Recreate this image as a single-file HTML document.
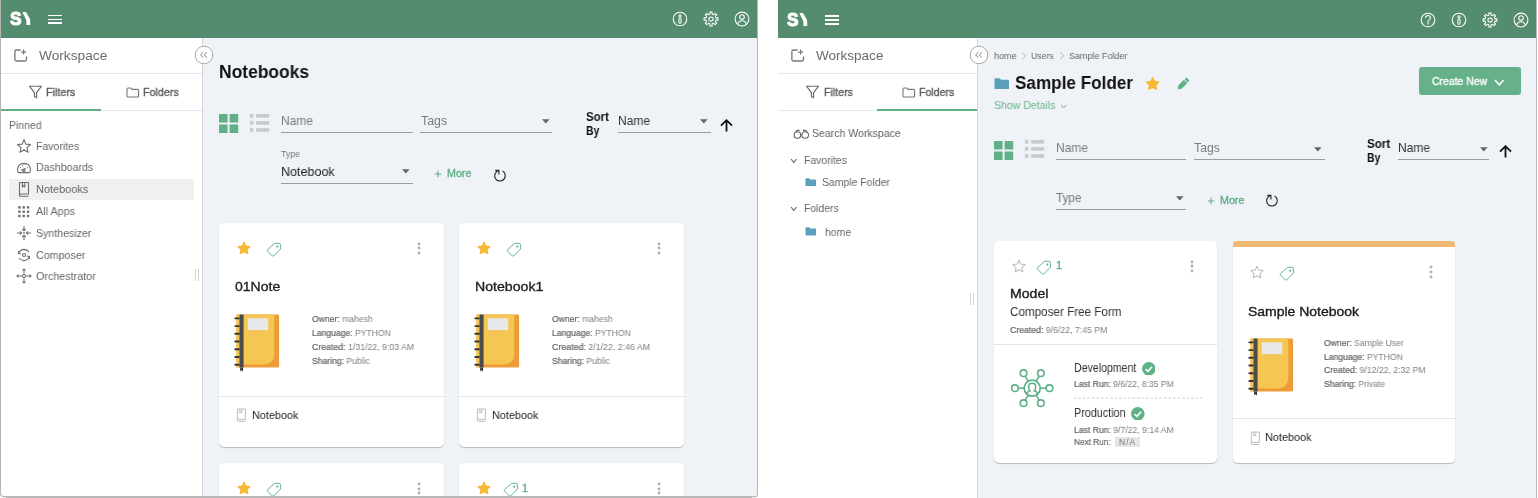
<!DOCTYPE html>
<html><head><meta charset="utf-8"><style>
html,body{margin:0;padding:0;}
body{width:1538px;height:498px;overflow:hidden;position:relative;background:#fff;font-family:"Liberation Sans",sans-serif;}
.t{position:absolute;white-space:nowrap;transform-origin:0 0;will-change:transform;}
.r{position:absolute;}
b{font-weight:bold;}
.lb{color:#666;-webkit-text-stroke:0.22px #666;}
</style></head><body>
<div class="r" style="left:0px;top:0px;width:758px;height:498px;background:#b4b4b4;border-bottom-left-radius:4px;border-bottom-right-radius:4px;"></div>
<div class="r" style="left:1px;top:0px;width:756px;height:496px;background:#ffffff;border-bottom-left-radius:3px;border-bottom-right-radius:3px;overflow:hidden;"></div>
<div class="r" style="left:1px;top:0px;width:756px;height:38px;background:#548c6f;"></div>
<div class="r" style="left:203px;top:38px;width:554px;height:458px;background:#eff3f7;border-bottom-right-radius:3px;"></div>
<div class="r" style="left:202px;top:38px;width:1px;height:458px;background:#d3d6da;"></div>
<div class="r" style="left:778px;top:0px;width:759px;height:498px;background:#b8b8b8;"></div>
<div class="r" style="left:778px;top:0px;width:758px;height:498px;background:#ffffff;"></div>
<div class="r" style="left:778px;top:0px;width:758px;height:38px;background:#548c6f;"></div>
<div class="r" style="left:978px;top:38px;width:558px;height:460px;background:#eff3f7;"></div>
<div class="r" style="left:977px;top:38px;width:1px;height:460px;background:#d3d6da;"></div>
<div class="t" style="left:10.3px;top:9.2px;font-size:19px;line-height:19px;color:#fff;font-weight:bold;transform:scaleX(0.9);-webkit-text-stroke:1.1px #fff;">S</div>
<svg class="r" style="left:20.3px;top:10px;" width="14" height="17" viewBox="0 0 14 17"><path d="M2.3 2.1 L6.0 2.1 L9.6 8.2 Q10.2 9.2 10.2 10.4 L10.2 15 L6.4 15 L6.4 11 Q6.4 10.2 6 9.5 Z" fill="#fff"/></svg>
<div class="r" style="left:48px;top:14.5px;width:14px;height:1.7px;background:#fff;"></div>
<div class="r" style="left:48px;top:18.5px;width:14px;height:1.7px;background:#fff;"></div>
<div class="r" style="left:48px;top:22.4px;width:14px;height:1.7px;background:#fff;"></div>
<svg class="r" style="left:670.5px;top:10.2px;" width="18" height="18" viewBox="0 0 18 18"><circle cx="9" cy="9" r="6.8" fill="none" stroke="#fff" stroke-width="1.05"/><circle cx="9" cy="5.9" r="1.1" fill="none" stroke="#fff" stroke-width="1.05"/><rect x="7.9" y="8.3" width="2.2" height="5" rx="1.1" fill="none" stroke="#fff" stroke-width="1.05"/></svg>
<svg class="r" style="left:701.6px;top:10.2px;" width="18" height="18" viewBox="0 0 18 18"><path d="M7.09 4.38 L7.88 4.13 L7.84 2.10 L10.16 2.10 L10.12 4.13 L10.91 4.38 L11.65 4.76 L13.06 3.30 L14.70 4.94 L13.24 6.35 L13.62 7.09 L13.87 7.88 L15.90 7.84 L15.90 10.16 L13.87 10.12 L13.62 10.91 L13.24 11.65 L14.70 13.06 L13.06 14.70 L11.65 13.24 L10.91 13.62 L10.12 13.87 L10.16 15.90 L7.84 15.90 L7.88 13.87 L7.09 13.62 L6.35 13.24 L4.94 14.70 L3.30 13.06 L4.76 11.65 L4.38 10.91 L4.13 10.12 L2.10 10.16 L2.10 7.84 L4.13 7.88 L4.38 7.09 L4.76 6.35 L3.30 4.94 L4.94 3.30 L6.35 4.76 Z" fill="none" stroke="#fff" stroke-width="1.05" stroke-linejoin="round"/><circle cx="9" cy="9" r="2.1" fill="none" stroke="#fff" stroke-width="1.05"/></svg>
<svg class="r" style="left:732.5px;top:10.2px;" width="18" height="18" viewBox="0 0 18 18"><circle cx="9" cy="9" r="6.9" fill="none" stroke="#fff" stroke-width="1.05"/><circle cx="9" cy="7" r="2.3" fill="none" stroke="#fff" stroke-width="1.05"/><path d="M4.6 14.3 Q5.6 10.8 9 10.8 Q12.4 10.8 13.4 14.3" fill="none" stroke="#fff" stroke-width="1.05"/></svg>
<div class="t" style="left:787.3px;top:9.899999999999999px;font-size:19px;line-height:19px;color:#fff;font-weight:bold;transform:scaleX(0.9);-webkit-text-stroke:1.1px #fff;">S</div>
<svg class="r" style="left:797.3px;top:10.7px;" width="14" height="17" viewBox="0 0 14 17"><path d="M2.3 2.1 L6.0 2.1 L9.6 8.2 Q10.2 9.2 10.2 10.4 L10.2 15 L6.4 15 L6.4 11 Q6.4 10.2 6 9.5 Z" fill="#fff"/></svg>
<div class="r" style="left:825px;top:15.2px;width:14px;height:1.7px;background:#fff;"></div>
<div class="r" style="left:825px;top:19.2px;width:14px;height:1.7px;background:#fff;"></div>
<div class="r" style="left:825px;top:23.099999999999998px;width:14px;height:1.7px;background:#fff;"></div>
<svg class="r" style="left:1419.3px;top:10.899999999999999px;" width="18" height="18" viewBox="0 0 18 18"><circle cx="9" cy="9" r="6.8" fill="none" stroke="#fff" stroke-width="1.05"/><path d="M6.6 7 Q6.6 4.4 9 4.4 Q11.4 4.4 11.4 6.8 Q11.4 8.3 9.6 9.4 Q9 9.8 9 11 L9 13.6" fill="none" stroke="#fff" stroke-width="1.05"/></svg>
<svg class="r" style="left:1450px;top:10.899999999999999px;" width="18" height="18" viewBox="0 0 18 18"><circle cx="9" cy="9" r="6.8" fill="none" stroke="#fff" stroke-width="1.05"/><circle cx="9" cy="5.9" r="1.1" fill="none" stroke="#fff" stroke-width="1.05"/><rect x="7.9" y="8.3" width="2.2" height="5" rx="1.1" fill="none" stroke="#fff" stroke-width="1.05"/></svg>
<svg class="r" style="left:1481px;top:10.899999999999999px;" width="18" height="18" viewBox="0 0 18 18"><path d="M7.09 4.38 L7.88 4.13 L7.84 2.10 L10.16 2.10 L10.12 4.13 L10.91 4.38 L11.65 4.76 L13.06 3.30 L14.70 4.94 L13.24 6.35 L13.62 7.09 L13.87 7.88 L15.90 7.84 L15.90 10.16 L13.87 10.12 L13.62 10.91 L13.24 11.65 L14.70 13.06 L13.06 14.70 L11.65 13.24 L10.91 13.62 L10.12 13.87 L10.16 15.90 L7.84 15.90 L7.88 13.87 L7.09 13.62 L6.35 13.24 L4.94 14.70 L3.30 13.06 L4.76 11.65 L4.38 10.91 L4.13 10.12 L2.10 10.16 L2.10 7.84 L4.13 7.88 L4.38 7.09 L4.76 6.35 L3.30 4.94 L4.94 3.30 L6.35 4.76 Z" fill="none" stroke="#fff" stroke-width="1.05" stroke-linejoin="round"/><circle cx="9" cy="9" r="2.1" fill="none" stroke="#fff" stroke-width="1.05"/></svg>
<svg class="r" style="left:1511.7px;top:10.899999999999999px;" width="18" height="18" viewBox="0 0 18 18"><circle cx="9" cy="9" r="6.9" fill="none" stroke="#fff" stroke-width="1.05"/><circle cx="9" cy="7" r="2.3" fill="none" stroke="#fff" stroke-width="1.05"/><path d="M4.6 14.3 Q5.6 10.8 9 10.8 Q12.4 10.8 13.4 14.3" fill="none" stroke="#fff" stroke-width="1.05"/></svg>
<svg class="r" style="left:12.6px;top:48.3px;" width="16" height="16" viewBox="0 0 16 16"><path d="M7.6 2 L3.3 2 Q1.9 2 1.9 3.4 L1.9 11.6 Q1.9 13 3.3 13 L12 13 Q13.5 13 13.5 11.6 L13.5 8.6" fill="none" stroke="#777" stroke-width="1.3"/><path d="M10.6 1.6 L10.6 6.6 M8.1 4.1 L13.1 4.1" fill="none" stroke="#777" stroke-width="1.2"/></svg>
<div class="r" style="left:1px;top:72.5px;width:201px;height:1px;background:#e3e6ea;"></div>
<svg class="r" style="left:27.5px;top:84.5px;" width="16" height="15" viewBox="0 0 16 15"><path d="M1.5 1.2 L13.5 1.2 L8.6 7.6 L8.6 12.8 L6.4 11.6 L6.4 7.6 Z" fill="none" stroke="#6a6a6a" stroke-width="1.15" stroke-linejoin="round"/></svg>
<svg class="r" style="left:126px;top:87px;" width="14" height="11" viewBox="0 0 14 11"><path d="M1 2 Q1 1 2 1 L4.8 1 L6.2 2.4 L11.6 2.4 Q12.6 2.4 12.6 3.4 L12.6 9 Q12.6 10 11.6 10 L2 10 Q1 10 1 9 Z" fill="none" stroke="#777" stroke-width="1.1" stroke-linejoin="round"/></svg>
<div class="r" style="left:1px;top:109.5px;width:201px;height:1px;background:#e6e9ec;"></div>
<div class="r" style="left:1px;top:108.8px;width:100px;height:2.2px;background:#5fae86;"></div>
<svg class="r" style="left:789.6px;top:48.3px;" width="16" height="16" viewBox="0 0 16 16"><path d="M7.6 2 L3.3 2 Q1.9 2 1.9 3.4 L1.9 11.6 Q1.9 13 3.3 13 L12 13 Q13.5 13 13.5 11.6 L13.5 8.6" fill="none" stroke="#777" stroke-width="1.3"/><path d="M10.6 1.6 L10.6 6.6 M8.1 4.1 L13.1 4.1" fill="none" stroke="#777" stroke-width="1.2"/></svg>
<div class="r" style="left:778px;top:72.5px;width:199px;height:1px;background:#e3e6ea;"></div>
<svg class="r" style="left:804.5px;top:84.5px;" width="16" height="15" viewBox="0 0 16 15"><path d="M1.5 1.2 L13.5 1.2 L8.6 7.6 L8.6 12.8 L6.4 11.6 L6.4 7.6 Z" fill="none" stroke="#6a6a6a" stroke-width="1.15" stroke-linejoin="round"/></svg>
<svg class="r" style="left:901.8px;top:87px;" width="14" height="11" viewBox="0 0 14 11"><path d="M1 2 Q1 1 2 1 L4.8 1 L6.2 2.4 L11.6 2.4 Q12.6 2.4 12.6 3.4 L12.6 9 Q12.6 10 11.6 10 L2 10 Q1 10 1 9 Z" fill="none" stroke="#777" stroke-width="1.1" stroke-linejoin="round"/></svg>
<div class="r" style="left:778px;top:109.5px;width:199px;height:1px;background:#e6e9ec;"></div>
<div class="r" style="left:877.3px;top:108.8px;width:99.7px;height:2.2px;background:#5fae86;"></div>
<svg class="r" style="left:193.9px;top:44.6px;" width="20" height="20" viewBox="0 0 20 20"><circle cx="10" cy="10" r="8.8" fill="#fff" stroke="#a8a8a8" stroke-width="1"/><path d="M9.4 7.2 L6.6 9.9 L9.4 12.6 M13 7.2 L10.2 9.9 L13 12.6" fill="none" stroke="#7a7a7a" stroke-width="0.95"/></svg>
<svg class="r" style="left:969px;top:44.8px;" width="20" height="20" viewBox="0 0 20 20"><circle cx="10" cy="10" r="8.8" fill="#fff" stroke="#a8a8a8" stroke-width="1"/><path d="M9.4 7.2 L6.6 9.9 L9.4 12.6 M13 7.2 L10.2 9.9 L13 12.6" fill="none" stroke="#7a7a7a" stroke-width="0.95"/></svg>
<div id="ws_l" class="t" style="left:39.40px;top:49.00px;font-size:13.5px;line-height:13.5px;color:#6b6b6b;font-weight:normal;transform:scaleX(1.0151);">Workspace</div>
<div id="fil_l" class="t" style="left:46.30px;top:87.00px;font-size:11.2px;line-height:11.2px;color:#5a5a5a;font-weight:normal;transform:scaleX(0.9649);-webkit-text-stroke:0.35px #5a5a5a;">Filters</div>
<div id="fol_l" class="t" style="left:143.30px;top:87.00px;font-size:11.2px;line-height:11.2px;color:#5a5a5a;font-weight:normal;transform:scaleX(0.9595);-webkit-text-stroke:0.35px #5a5a5a;">Folders</div>
<div id="pinned" class="t" style="left:8.70px;top:120.00px;font-size:11px;line-height:11px;color:#6b6b6b;font-weight:normal;transform:scaleX(0.9514);">Pinned</div>
<div class="r" style="left:9px;top:179px;width:185px;height:21px;background:#f0f0f0;"></div>
<div id="pin0" class="t" style="left:35.70px;top:141.00px;font-size:11px;line-height:11px;color:#666;font-weight:normal;transform:scaleX(0.9569);">Favorites</div>
<div id="pin1" class="t" style="left:35.70px;top:162.00px;font-size:11px;line-height:11px;color:#666;font-weight:normal;transform:scaleX(0.9641);">Dashboards</div>
<div id="pin2" class="t" style="left:35.70px;top:184.00px;font-size:11px;line-height:11px;color:#666;font-weight:normal;transform:scaleX(0.9944);">Notebooks</div>
<div id="pin3" class="t" style="left:35.70px;top:206.00px;font-size:11px;line-height:11px;color:#666;font-weight:normal;transform:scaleX(0.9811);">All Apps</div>
<div id="pin4" class="t" style="left:35.70px;top:228.00px;font-size:11px;line-height:11px;color:#666;font-weight:normal;transform:scaleX(0.9637);">Synthesizer</div>
<div id="pin5" class="t" style="left:35.70px;top:250.00px;font-size:11px;line-height:11px;color:#666;font-weight:normal;transform:scaleX(0.9734);">Composer</div>
<div id="pin6" class="t" style="left:35.70px;top:271.00px;font-size:11px;line-height:11px;color:#666;font-weight:normal;transform:scaleX(0.9764);">Orchestrator</div>
<svg class="r" style="left:16px;top:138px;" width="16" height="16" viewBox="0 0 16 16"><path d="M8.00 1.70 L9.82 6.09 L14.56 6.47 L10.95 9.56 L12.06 14.18 L8.00 11.70 L3.94 14.18 L5.05 9.56 L1.44 6.47 L6.18 6.09 Z" fill="none" stroke="#6e6e6e" stroke-width="1.1" stroke-linejoin="round"/></svg>
<svg class="r" style="left:16px;top:160px;" width="16" height="16" viewBox="0 0 16 16"><path d="M2.3 12.6 Q1.4 11 1.6 9 Q2.2 3.6 8 3.4 Q13.8 3.6 14.4 9 Q14.6 11 13.7 12.6 Z" fill="none" stroke="#6e6e6e" stroke-width="1.1" stroke-linejoin="round"/><path d="M5 10.5 L9.6 8.3" fill="none" stroke="#6e6e6e" stroke-width="1.1"/><circle cx="8" cy="10.4" r="1" fill="none" stroke="#6e6e6e" stroke-width="1.1"/><path d="M4 7.5 L4.8 8 M6.3 5.6 L6.7 6.3 M11.9 7.5 L11.2 8" fill="none" stroke="#6e6e6e" stroke-width="1.1"/></svg>
<svg class="r" style="left:16px;top:181px;" width="16" height="18" viewBox="0 0 16 18"><path d="M3.5 1.5 L12.5 1.5 L12.5 13 L4.6 13 Q3.5 13 3.5 14.2 Q3.5 15.3 4.6 15.3 L12.5 15.3 M3.5 1.5 L3.5 14.2 M6.4 1.5 L6.4 5.8 L7.6 4.8 L8.8 5.8 L8.8 1.5" fill="none" stroke="#6e6e6e" stroke-width="1.1"/></svg>
<svg class="r" style="left:16px;top:204px;" width="16" height="16" viewBox="0 0 16 16"><rect x="2.2" y="2.2" width="2.4" height="2.4" fill="#6e6e6e"/><rect x="6.5" y="2.2" width="2.4" height="2.4" fill="#6e6e6e"/><rect x="10.8" y="2.2" width="2.4" height="2.4" fill="#6e6e6e"/><rect x="2.2" y="6.5" width="2.4" height="2.4" fill="#6e6e6e"/><rect x="6.5" y="6.5" width="2.4" height="2.4" fill="#6e6e6e"/><rect x="10.8" y="6.5" width="2.4" height="2.4" fill="#6e6e6e"/><rect x="2.2" y="10.8" width="2.4" height="2.4" fill="#6e6e6e"/><rect x="6.5" y="10.8" width="2.4" height="2.4" fill="#6e6e6e"/><rect x="10.8" y="10.8" width="2.4" height="2.4" fill="#6e6e6e"/></svg>
<svg class="r" style="left:16px;top:225px;" width="16" height="16" viewBox="0 0 16 16"><path d="M8 1 L8 5.6 M8 10.4 L8 15 M1 8 L5.6 8 M10.4 8 L15 8" fill="none" stroke="#6e6e6e" stroke-width="1.1"/><path d="M6.4 4 L8 5.6 L9.6 4 M6.4 12 L8 10.4 L9.6 12 M4 6.4 L5.6 8 L4 9.6 M12 6.4 L10.4 8 L12 9.6" fill="none" stroke="#6e6e6e" stroke-width="1.1"/><circle cx="8" cy="8" r="0.9" fill="#6e6e6e"/></svg>
<svg class="r" style="left:16px;top:247px;" width="16" height="16" viewBox="0 0 16 16"><path d="M2.6 6.6 Q3.8 2.6 8.2 2.4 Q11.4 2.6 12.8 5" fill="none" stroke="#6e6e6e" stroke-width="1.1"/><path d="M13.4 9.4 Q12.2 13.4 7.8 13.6 Q4.6 13.4 3.2 11" fill="none" stroke="#6e6e6e" stroke-width="1.1"/><path d="M2.6 4 L2.6 6.8 L5.2 6.8 M13.4 12 L13.4 9.2 L10.8 9.2" fill="none" stroke="#6e6e6e" stroke-width="1.1"/><circle cx="8" cy="8" r="1.5" fill="none" stroke="#6e6e6e" stroke-width="1.1"/></svg>
<svg class="r" style="left:16px;top:268px;" width="16" height="16" viewBox="0 0 16 16"><path d="M8 1 L8 5.8 M8 10.2 L8 15 M1 8 L5.8 8 M10.2 8 L15 8" fill="none" stroke="#6e6e6e" stroke-width="1.1"/><path d="M6.6 2.6 L8 1 L9.4 2.6 M6.6 13.4 L8 15 L9.4 13.4 M2.6 6.6 L1 8 L2.6 9.4 M13.4 6.6 L15 8 L13.4 9.4" fill="none" stroke="#6e6e6e" stroke-width="1.1"/><circle cx="8" cy="8" r="1.5" fill="none" stroke="#6e6e6e" stroke-width="1.1"/></svg>
<div class="r" style="left:195.3px;top:269px;width:1px;height:11.8px;background:#d2d2d2;"></div>
<div class="r" style="left:198.2px;top:269px;width:1px;height:11.8px;background:#d2d2d2;"></div>
<div id="ws_r" class="t" style="left:816.30px;top:49.00px;font-size:13.5px;line-height:13.5px;color:#6b6b6b;font-weight:normal;transform:scaleX(1.0018);">Workspace</div>
<div id="fil_r" class="t" style="left:823.50px;top:87.00px;font-size:11.2px;line-height:11.2px;color:#5a5a5a;font-weight:normal;transform:scaleX(0.9485);-webkit-text-stroke:0.35px #5a5a5a;">Filters</div>
<div id="fol_r" class="t" style="left:919.20px;top:87.00px;font-size:11.2px;line-height:11.2px;color:#5a5a5a;font-weight:normal;transform:scaleX(0.9461);-webkit-text-stroke:0.35px #5a5a5a;">Folders</div>
<svg class="r" style="left:792.5px;top:128.5px;" width="17" height="11" viewBox="0 0 17 11"><circle cx="4.4" cy="6" r="3.3" fill="none" stroke="#666" stroke-width="1.1"/><circle cx="12.2" cy="6" r="3.3" fill="none" stroke="#666" stroke-width="1.1"/><path d="M2.2 3.5 L4 1.4 L6.6 1.4 M14.4 3.5 L12.6 1.4 L10 1.4 M7.7 5.5 L8.9 5.5" fill="none" stroke="#666" stroke-width="1.1"/></svg>
<div id="search" class="t" style="left:812.30px;top:128.00px;font-size:11px;line-height:11px;color:#5f5f5f;font-weight:normal;transform:scaleX(0.9576);">Search Workspace</div>
<svg class="r" style="left:789.6px;top:158.2px;" width="7.6" height="5.4" viewBox="0 0 7.6 5.4"><path d="M1 1 L3.8 4.4 L6.6 1" fill="none" stroke="#666" stroke-width="1.1"/></svg>
<div id="favs_r" class="t" style="left:803.70px;top:155.00px;font-size:11px;line-height:11px;color:#666;font-weight:normal;transform:scaleX(0.9503);">Favorites</div>
<svg class="r" style="left:804.8px;top:177.5px;" width="11.5" height="8.8" viewBox="0 0 11.5 8.8"><path d="M0.5 1.2 Q0.5 0.3 1.4 0.3 L4.14 0.3 L5.29 1.41 L10.30 1.41 Q11.20 1.41 11.20 2.79 L11.20 7.70 Q11.20 8.60 10.30 8.60 L1.4 8.60 Q0.5 8.60 0.5 7.70 Z" fill="#5b9fbd"/></svg>
<div id="sf_r" class="t" style="left:822.00px;top:177.00px;font-size:11px;line-height:11px;color:#666;font-weight:normal;transform:scaleX(0.9490);">Sample Folder</div>
<svg class="r" style="left:789.6px;top:206.0px;" width="7.6" height="5.4" viewBox="0 0 7.6 5.4"><path d="M1 1 L3.8 4.4 L6.6 1" fill="none" stroke="#666" stroke-width="1.1"/></svg>
<div id="fold_tree" class="t" style="left:803.70px;top:203.00px;font-size:11px;line-height:11px;color:#666;font-weight:normal;transform:scaleX(0.9458);">Folders</div>
<svg class="r" style="left:804.8px;top:227.2px;" width="11.5" height="8.8" viewBox="0 0 11.5 8.8"><path d="M0.5 1.2 Q0.5 0.3 1.4 0.3 L4.14 0.3 L5.29 1.41 L10.30 1.41 Q11.20 1.41 11.20 2.79 L11.20 7.70 Q11.20 8.60 10.30 8.60 L1.4 8.60 Q0.5 8.60 0.5 7.70 Z" fill="#5b9fbd"/></svg>
<div id="home_r" class="t" style="left:824.60px;top:227.00px;font-size:11px;line-height:11px;color:#666;font-weight:normal;transform:scaleX(0.9480);">home</div>
<div class="r" style="left:969.9px;top:293px;width:1px;height:12px;background:#d2d2d2;"></div>
<div class="r" style="left:973px;top:293px;width:1px;height:12px;background:#d2d2d2;"></div>
<div id="title_l" class="t" style="left:219.10px;top:64.00px;font-size:17.5px;line-height:17.5px;color:#111;font-weight:bold;transform:scaleX(0.9952);">Notebooks</div>
<svg class="r" style="left:219px;top:113.8px;" width="19.5" height="19.5" viewBox="0 0 19.5 19.5"><rect x="0.0" y="0.0" width="8.6" height="8.6" rx="0.6" fill="#60b088"/><rect x="10.6" y="0.0" width="8.6" height="8.6" rx="0.6" fill="#60b088"/><rect x="0.0" y="10.6" width="8.6" height="8.6" rx="0.6" fill="#60b088"/><rect x="10.6" y="10.6" width="8.6" height="8.6" rx="0.6" fill="#60b088"/></svg>
<svg class="r" style="left:250px;top:113.8px;" width="19.5" height="19" viewBox="0 0 19.5 19"><rect x="0" y="0.0" width="3.4" height="3.6" fill="#c5cacf"/><rect x="6.2" y="0.0" width="13" height="3.6" fill="#c5cacf"/><rect x="0" y="7.1" width="3.4" height="3.6" fill="#c5cacf"/><rect x="6.2" y="7.1" width="13" height="3.6" fill="#c5cacf"/><rect x="0" y="14.2" width="3.4" height="3.6" fill="#c5cacf"/><rect x="6.2" y="14.2" width="13" height="3.6" fill="#c5cacf"/></svg>
<div id="nm_l" class="t" style="left:281.10px;top:115.00px;font-size:12.2px;line-height:12.2px;color:#7b7b7b;font-weight:normal;transform:scaleX(0.9811);">Name</div>
<div class="r" style="left:281px;top:132px;width:131.7px;height:1px;background:#9a9a9a;"></div>
<div id="tg_l" class="t" style="left:420.50px;top:115.00px;font-size:12.2px;line-height:12.2px;color:#7b7b7b;font-weight:normal;transform:scaleX(1.0175);">Tags</div>
<svg class="r" style="left:541.5px;top:118.7px;" width="8" height="5" viewBox="0 0 8 5"><path d="M0 0.2 L7.6 0.2 L3.8 4.6 Z" fill="#666"/></svg>
<div class="r" style="left:420.3px;top:132px;width:131.7px;height:1px;background:#9a9a9a;"></div>
<div id="sort_l" class="t" style="left:586.30px;top:111.00px;font-size:12px;line-height:12px;color:#111;font-weight:bold;transform:scaleX(0.9542);">Sort</div>
<div id="by_l" class="t" style="left:586.30px;top:125.00px;font-size:12px;line-height:12px;color:#111;font-weight:bold;transform:scaleX(0.8668);">By</div>
<div id="sn_l" class="t" style="left:617.60px;top:115.00px;font-size:12.2px;line-height:12.2px;color:#333;font-weight:normal;transform:scaleX(0.9872);">Name</div>
<svg class="r" style="left:699.9px;top:119px;" width="8" height="5" viewBox="0 0 8 5"><path d="M0 0.2 L7.6 0.2 L3.8 4.6 Z" fill="#666"/></svg>
<div class="r" style="left:617.9px;top:132px;width:92.8px;height:1px;background:#9a9a9a;"></div>
<svg class="r" style="left:719.5px;top:118.5px;" width="13" height="13" viewBox="0 0 13 13"><path d="M6.5 12.5 L6.5 1.2 M1 6.6 L6.5 1.2 L12 6.6" fill="none" stroke="#111" stroke-width="1.8"/></svg>
<div id="type_l" class="t" style="left:280.70px;top:150.00px;font-size:9px;line-height:9px;color:#777;font-weight:normal;transform:scaleX(0.9736);">Type</div>
<div id="nbsel_l" class="t" style="left:280.70px;top:165.00px;font-size:13.2px;line-height:13.2px;color:#222;font-weight:normal;transform:scaleX(0.9512);">Notebook</div>
<svg class="r" style="left:402.3px;top:169px;" width="8" height="5" viewBox="0 0 8 5"><path d="M0 0.2 L7.6 0.2 L3.8 4.6 Z" fill="#666"/></svg>
<div class="r" style="left:281px;top:183px;width:131.7px;height:1px;background:#9a9a9a;"></div>
<svg class="r" style="left:434.3px;top:170.3px;" width="8" height="8" viewBox="0 0 8 8"><path d="M4 0.8 L4 7.2 M0.8 4 L7.2 4" fill="none" stroke="#5fae86" stroke-width="1.1"/></svg>
<div id="more_l" class="t" style="left:446.50px;top:168.00px;font-size:10.5px;line-height:10.5px;color:#5fae86;font-weight:normal;transform:scaleX(1.0193);-webkit-text-stroke:0.35px #5fae86;">More</div>
<svg class="r" style="left:492.5px;top:168.5px;" width="14" height="14" viewBox="0 0 14 14"><path d="M9.6 2.1 A5.3 5.3 0 1 1 5.9 1.5" fill="none" stroke="#2a2a2a" stroke-width="1.15"/><path d="M2.2 1.4 L5.9 1.4 L5.9 5.5" fill="none" stroke="#2a2a2a" stroke-width="1.15"/></svg>
<div id="bc1" class="t" style="left:994.20px;top:51.00px;font-size:9.5px;line-height:9.5px;color:#666;font-weight:normal;transform:scaleX(0.9467);">home</div>
<div id="bc2" class="t" style="left:1031.30px;top:51.00px;font-size:9.5px;line-height:9.5px;color:#666;font-weight:normal;transform:scaleX(0.9108);">Users</div>
<div id="bc3" class="t" style="left:1068.50px;top:51.00px;font-size:9.5px;line-height:9.5px;color:#666;font-weight:normal;transform:scaleX(0.9453);">Sample Folder</div>
<svg class="r" style="left:1021.3px;top:51px;" width="6" height="10" viewBox="0 0 6 10"><path d="M1.5 1.5 L4.5 4.8 L1.5 8.1" fill="none" stroke="#aaa" stroke-width="0.9"/></svg>
<svg class="r" style="left:1058.8px;top:51px;" width="6" height="10" viewBox="0 0 6 10"><path d="M1.5 1.5 L4.5 4.8 L1.5 8.1" fill="none" stroke="#aaa" stroke-width="0.9"/></svg>
<svg class="r" style="left:994px;top:77.6px;" width="15.4" height="11.6" viewBox="0 0 15.4 11.6"><path d="M0.5 1.2 Q0.5 0.3 1.4 0.3 L5.54 0.3 L7.08 1.86 L14.20 1.86 Q15.10 1.86 15.10 3.52 L15.10 10.50 Q15.10 11.40 14.20 11.40 L1.4 11.40 Q0.5 11.40 0.5 10.50 Z" fill="#5b9fbd"/></svg>
<div id="title_r" class="t" style="left:1014.70px;top:74.00px;font-size:18.5px;line-height:18.5px;color:#111;font-weight:bold;transform:scaleX(0.9256);">Sample Folder</div>
<svg class="r" style="left:1145px;top:76px;" width="16" height="15" viewBox="0 0 16 15"><path d="M7.60 1.70 L9.54 5.43 L13.69 6.12 L10.74 9.12 L11.36 13.28 L7.60 11.40 L3.84 13.28 L4.46 9.12 L1.51 6.12 L5.66 5.43 Z" fill="#f6b830" stroke="#f6b830" stroke-width="1.3" stroke-linejoin="round"/></svg>
<svg class="r" style="left:1175.8px;top:77px;" width="14" height="14" viewBox="0 0 14 14"><g transform="rotate(-45 7 7)"><path d="M0 7 L3 4.8 L10.5 4.8 L10.5 9.2 L3 9.2 Z" fill="#5db185" stroke="#5db185" stroke-width="0.5" stroke-linejoin="round"/><path d="M11.5 4.8 L13.2 4.8 Q14.1 4.8 14.1 5.7 L14.1 8.3 Q14.1 9.2 13.2 9.2 L11.5 9.2 Z" fill="#5db185"/></g></svg>
<div id="showdet" class="t" style="left:994.20px;top:100.00px;font-size:11.3px;line-height:11.3px;color:#6ab48c;font-weight:normal;transform:scaleX(0.9327);">Show Details</div>
<svg class="r" style="left:1060.4px;top:104px;" width="7.2" height="5" viewBox="0 0 7.2 5"><path d="M1 1 L3.6 4 L6.2 1" fill="none" stroke="#6ab48c" stroke-width="1.0"/></svg>
<div class="r" style="left:1419px;top:67.2px;width:102px;height:28px;background:#66b08a;border-radius:3px;"></div>
<div id="create" class="t" style="left:1431.50px;top:76.00px;font-size:11.2px;line-height:11.2px;color:#fff;font-weight:normal;transform:scaleX(0.9344);-webkit-text-stroke:0.35px #fff;">Create New</div>
<svg class="r" style="left:1494px;top:79px;" width="10.6" height="6.8" viewBox="0 0 10.6 6.8"><path d="M1 1 L5.3 5.8 L9.6 1" fill="none" stroke="#fff" stroke-width="1.5"/></svg>
<svg class="r" style="left:994px;top:140.5px;" width="19.5" height="19.5" viewBox="0 0 19.5 19.5"><rect x="0.0" y="0.0" width="8.6" height="8.6" rx="0.6" fill="#60b088"/><rect x="10.6" y="0.0" width="8.6" height="8.6" rx="0.6" fill="#60b088"/><rect x="0.0" y="10.6" width="8.6" height="8.6" rx="0.6" fill="#60b088"/><rect x="10.6" y="10.6" width="8.6" height="8.6" rx="0.6" fill="#60b088"/></svg>
<svg class="r" style="left:1025px;top:140.3px;" width="19.5" height="19" viewBox="0 0 19.5 19"><rect x="0" y="0.0" width="3.4" height="3.6" fill="#c5cacf"/><rect x="6.2" y="0.0" width="13" height="3.6" fill="#c5cacf"/><rect x="0" y="7.1" width="3.4" height="3.6" fill="#c5cacf"/><rect x="6.2" y="7.1" width="13" height="3.6" fill="#c5cacf"/><rect x="0" y="14.2" width="3.4" height="3.6" fill="#c5cacf"/><rect x="6.2" y="14.2" width="13" height="3.6" fill="#c5cacf"/></svg>
<div id="nm_r" class="t" style="left:1055.70px;top:142.00px;font-size:12.2px;line-height:12.2px;color:#7b7b7b;font-weight:normal;transform:scaleX(0.9841);">Name</div>
<div class="r" style="left:1056px;top:159px;width:130.3px;height:1px;background:#9a9a9a;"></div>
<div id="tg_r" class="t" style="left:1193.70px;top:142.00px;font-size:12.2px;line-height:12.2px;color:#7b7b7b;font-weight:normal;transform:scaleX(1.0058);">Tags</div>
<svg class="r" style="left:1314px;top:146.5px;" width="8" height="5" viewBox="0 0 8 5"><path d="M0 0.2 L7.6 0.2 L3.8 4.6 Z" fill="#666"/></svg>
<div class="r" style="left:1194px;top:159px;width:130.8px;height:1px;background:#9a9a9a;"></div>
<div id="sort_r" class="t" style="left:1366.50px;top:138.00px;font-size:12px;line-height:12px;color:#111;font-weight:bold;transform:scaleX(0.9667);">Sort</div>
<div id="by_r" class="t" style="left:1366.50px;top:152.00px;font-size:12px;line-height:12px;color:#111;font-weight:bold;transform:scaleX(0.8668);">By</div>
<div id="sn_r" class="t" style="left:1397.50px;top:142.00px;font-size:12.2px;line-height:12.2px;color:#333;font-weight:normal;transform:scaleX(0.9841);">Name</div>
<svg class="r" style="left:1479.6px;top:146.5px;" width="8" height="5" viewBox="0 0 8 5"><path d="M0 0.2 L7.6 0.2 L3.8 4.6 Z" fill="#666"/></svg>
<div class="r" style="left:1397.8px;top:159px;width:91.7px;height:1px;background:#9a9a9a;"></div>
<svg class="r" style="left:1498.8px;top:145px;" width="13" height="13" viewBox="0 0 13 13"><path d="M6.5 12.5 L6.5 1.2 M1 6.6 L6.5 1.2 L12 6.6" fill="none" stroke="#111" stroke-width="1.8"/></svg>
<div id="type_r" class="t" style="left:1055.70px;top:192.00px;font-size:12.2px;line-height:12.2px;color:#777;font-weight:normal;transform:scaleX(0.9613);">Type</div>
<svg class="r" style="left:1175.6px;top:196.3px;" width="8" height="5" viewBox="0 0 8 5"><path d="M0 0.2 L7.6 0.2 L3.8 4.6 Z" fill="#666"/></svg>
<div class="r" style="left:1056px;top:209px;width:130.3px;height:1px;background:#9a9a9a;"></div>
<svg class="r" style="left:1207.3px;top:197px;" width="8" height="8" viewBox="0 0 8 8"><path d="M4 0.8 L4 7.2 M0.8 4 L7.2 4" fill="none" stroke="#5fae86" stroke-width="1.1"/></svg>
<div id="more_r" class="t" style="left:1219.50px;top:195.00px;font-size:10.5px;line-height:10.5px;color:#5fae86;font-weight:normal;transform:scaleX(1.0193);-webkit-text-stroke:0.35px #5fae86;">More</div>
<svg class="r" style="left:1265px;top:194.3px;" width="14" height="14" viewBox="0 0 14 14"><path d="M9.6 2.1 A5.3 5.3 0 1 1 5.9 1.5" fill="none" stroke="#2a2a2a" stroke-width="1.15"/><path d="M2.2 1.4 L5.9 1.4 L5.9 5.5" fill="none" stroke="#2a2a2a" stroke-width="1.15"/></svg>
<div class="r" style="left:219.3px;top:222.7px;width:224.7px;height:224.3px;background:#fff;border-radius:5px;box-shadow:0 1px 1px rgba(0,0,0,0.24);"></div>
<svg class="r" style="left:236.60000000000002px;top:240.89999999999998px;" width="14" height="14" viewBox="0 0 14 14"><path d="M7.00 1.00 L8.88 5.01 L13.28 5.56 L10.04 8.59 L10.88 12.94 L7.00 10.80 L3.12 12.94 L3.96 8.59 L0.72 5.56 L5.12 5.01 Z" fill="#f6b830" stroke="#f6b830" stroke-width="1" stroke-linejoin="round"/></svg>
<svg class="r" style="left:266.0px;top:241.6px;" width="16" height="15" viewBox="0 0 16 15"><path d="M8.6 1.3 L13.4 1.3 Q14.4 1.3 14.4 2.3 L14.4 7.2 L7.6 14 Q7 14.6 6.4 14 L1.4 9 Q0.8 8.4 1.4 7.8 Z" fill="none" stroke="#62b38a" stroke-width="1.0" stroke-linejoin="round"/><circle cx="11.3" cy="4.6" r="1.05" fill="#62b38a"/></svg>
<svg class="r" style="left:416.80px;top:241.70px" width="4" height="4"><circle cx="2" cy="2" r="1.45" fill="#b0b0b0"/></svg>
<svg class="r" style="left:416.80px;top:246.40px" width="4" height="4"><circle cx="2" cy="2" r="1.45" fill="#b0b0b0"/></svg>
<svg class="r" style="left:416.80px;top:251.10px" width="4" height="4"><circle cx="2" cy="2" r="1.45" fill="#b0b0b0"/></svg>
<div id="c1t" class="t" style="left:234.60px;top:280.00px;font-size:13.2px;line-height:13.2px;color:#1e1e1e;font-weight:normal;transform:scaleX(1.0627);-webkit-text-stroke:0.35px #1e1e1e;">01Note</div>
<svg class="r" style="left:234.0px;top:313.5px;" width="46" height="58" viewBox="0 0 46 58"><path d="M2.5 0.6 L43.6 0.6 Q45.1 0.6 45.1 2 L45.1 52 Q45.1 53.4 43.6 53.4 L2.5 53.4 Z" fill="#ee9c3a"/><path d="M2.5 0.6 L40.3 0.6 L40.3 38.2 Q40.3 50.5 28.7 50.5 L2.5 50.5 Z" fill="#f6c652"/><rect x="2.5" y="50.5" width="3" height="2.9" fill="#f6c652"/><rect x="13.7" y="4.3" width="20.5" height="11.8" fill="#e8e8ea"/><rect x="5.5" y="0.6" width="4.1" height="52.8" fill="#4b4b4b"/><path d="M6.2 53.4 L9 53.4 L9 57.5 L7.6 56.2 L6.2 57.5 Z" fill="#333"/><rect x="0.4" y="3.40" width="5.3" height="1.9" rx="0.95" fill="#333"/><rect x="0.4" y="11.13" width="5.3" height="1.9" rx="0.95" fill="#333"/><rect x="0.4" y="18.86" width="5.3" height="1.9" rx="0.95" fill="#333"/><rect x="0.4" y="26.59" width="5.3" height="1.9" rx="0.95" fill="#333"/><rect x="0.4" y="34.32" width="5.3" height="1.9" rx="0.95" fill="#333"/><rect x="0.4" y="42.05" width="5.3" height="1.9" rx="0.95" fill="#333"/><rect x="0.4" y="49.78" width="5.3" height="1.9" rx="0.95" fill="#333"/></svg>
<div id="c1m0" class="t" style="left:311.60px;top:315.00px;font-size:9px;line-height:9px;color:#808080;font-weight:normal;transform:scaleX(0.955);"><span class="lb">Owner:</span> mahesh</div>
<div id="c1m1" class="t" style="left:311.60px;top:329.00px;font-size:9px;line-height:9px;color:#808080;font-weight:normal;transform:scaleX(0.955);"><span class="lb">Language:</span> PYTHON</div>
<div id="c1m2" class="t" style="left:311.60px;top:343.00px;font-size:9px;line-height:9px;color:#808080;font-weight:normal;transform:scaleX(0.9725);"><span class="lb">Created:</span> 1/31/22, 9:03 AM</div>
<div id="c1m3" class="t" style="left:311.60px;top:357.00px;font-size:9px;line-height:9px;color:#808080;font-weight:normal;transform:scaleX(0.955);"><span class="lb">Sharing:</span> Public</div>
<div class="r" style="left:219.3px;top:395.7px;width:225px;height:1px;background:#e6e6e6;"></div>
<svg class="r" style="left:236.3px;top:407.9px;" width="11" height="15" viewBox="0 0 11 15"><path d="M1.4 1 L9.4 1 L9.4 11.4 L2.4 11.4 Q1.4 11.4 1.4 12.4 Q1.4 13.4 2.4 13.4 L9.4 13.4 M1.4 1 L1.4 12.4 M3.8 1 L3.8 5 L4.8 4.2 L5.8 5 L5.8 1" fill="none" stroke="#b0b8c0" stroke-width="0.9"/></svg>
<div id="c1ft" class="t" style="left:252.40px;top:410.00px;font-size:11.5px;line-height:11.5px;color:#222;font-weight:normal;transform:scaleX(0.9424);">Notebook</div>
<div class="r" style="left:459.3px;top:222.7px;width:224.7px;height:224.3px;background:#fff;border-radius:5px;box-shadow:0 1px 1px rgba(0,0,0,0.24);"></div>
<svg class="r" style="left:476.6px;top:240.89999999999998px;" width="14" height="14" viewBox="0 0 14 14"><path d="M7.00 1.00 L8.88 5.01 L13.28 5.56 L10.04 8.59 L10.88 12.94 L7.00 10.80 L3.12 12.94 L3.96 8.59 L0.72 5.56 L5.12 5.01 Z" fill="#f6b830" stroke="#f6b830" stroke-width="1" stroke-linejoin="round"/></svg>
<svg class="r" style="left:506.0px;top:241.6px;" width="16" height="15" viewBox="0 0 16 15"><path d="M8.6 1.3 L13.4 1.3 Q14.4 1.3 14.4 2.3 L14.4 7.2 L7.6 14 Q7 14.6 6.4 14 L1.4 9 Q0.8 8.4 1.4 7.8 Z" fill="none" stroke="#62b38a" stroke-width="1.0" stroke-linejoin="round"/><circle cx="11.3" cy="4.6" r="1.05" fill="#62b38a"/></svg>
<svg class="r" style="left:656.80px;top:241.70px" width="4" height="4"><circle cx="2" cy="2" r="1.45" fill="#b0b0b0"/></svg>
<svg class="r" style="left:656.80px;top:246.40px" width="4" height="4"><circle cx="2" cy="2" r="1.45" fill="#b0b0b0"/></svg>
<svg class="r" style="left:656.80px;top:251.10px" width="4" height="4"><circle cx="2" cy="2" r="1.45" fill="#b0b0b0"/></svg>
<div id="c2t" class="t" style="left:474.60px;top:280.00px;font-size:13.2px;line-height:13.2px;color:#1e1e1e;font-weight:normal;transform:scaleX(1.0706);-webkit-text-stroke:0.35px #1e1e1e;">Notebook1</div>
<svg class="r" style="left:474.0px;top:313.5px;" width="46" height="58" viewBox="0 0 46 58"><path d="M2.5 0.6 L43.6 0.6 Q45.1 0.6 45.1 2 L45.1 52 Q45.1 53.4 43.6 53.4 L2.5 53.4 Z" fill="#ee9c3a"/><path d="M2.5 0.6 L40.3 0.6 L40.3 38.2 Q40.3 50.5 28.7 50.5 L2.5 50.5 Z" fill="#f6c652"/><rect x="2.5" y="50.5" width="3" height="2.9" fill="#f6c652"/><rect x="13.7" y="4.3" width="20.5" height="11.8" fill="#e8e8ea"/><rect x="5.5" y="0.6" width="4.1" height="52.8" fill="#4b4b4b"/><path d="M6.2 53.4 L9 53.4 L9 57.5 L7.6 56.2 L6.2 57.5 Z" fill="#333"/><rect x="0.4" y="3.40" width="5.3" height="1.9" rx="0.95" fill="#333"/><rect x="0.4" y="11.13" width="5.3" height="1.9" rx="0.95" fill="#333"/><rect x="0.4" y="18.86" width="5.3" height="1.9" rx="0.95" fill="#333"/><rect x="0.4" y="26.59" width="5.3" height="1.9" rx="0.95" fill="#333"/><rect x="0.4" y="34.32" width="5.3" height="1.9" rx="0.95" fill="#333"/><rect x="0.4" y="42.05" width="5.3" height="1.9" rx="0.95" fill="#333"/><rect x="0.4" y="49.78" width="5.3" height="1.9" rx="0.95" fill="#333"/></svg>
<div id="c2m0" class="t" style="left:551.60px;top:315.00px;font-size:9px;line-height:9px;color:#808080;font-weight:normal;transform:scaleX(0.955);"><span class="lb">Owner:</span> mahesh</div>
<div id="c2m1" class="t" style="left:551.60px;top:329.00px;font-size:9px;line-height:9px;color:#808080;font-weight:normal;transform:scaleX(0.955);"><span class="lb">Language:</span> PYTHON</div>
<div id="c2m2" class="t" style="left:551.60px;top:343.00px;font-size:9px;line-height:9px;color:#808080;font-weight:normal;transform:scaleX(0.9812);"><span class="lb">Created:</span> 2/1/22, 2:46 AM</div>
<div id="c2m3" class="t" style="left:551.60px;top:357.00px;font-size:9px;line-height:9px;color:#808080;font-weight:normal;transform:scaleX(0.955);"><span class="lb">Sharing:</span> Public</div>
<div class="r" style="left:459.3px;top:395.7px;width:225px;height:1px;background:#e6e6e6;"></div>
<svg class="r" style="left:476.3px;top:407.9px;" width="11" height="15" viewBox="0 0 11 15"><path d="M1.4 1 L9.4 1 L9.4 11.4 L2.4 11.4 Q1.4 11.4 1.4 12.4 Q1.4 13.4 2.4 13.4 L9.4 13.4 M1.4 1 L1.4 12.4 M3.8 1 L3.8 5 L4.8 4.2 L5.8 5 L5.8 1" fill="none" stroke="#b0b8c0" stroke-width="0.9"/></svg>
<div id="c2ft" class="t" style="left:492.40px;top:410.00px;font-size:11.5px;line-height:11.5px;color:#222;font-weight:normal;transform:scaleX(0.9424);">Notebook</div>
<div class="r" style="left:219.3px;top:463px;width:225px;height:60px;background:#fff;border-radius:5px;box-shadow:0 1px 1px rgba(0,0,0,0.24);"></div>
<svg class="r" style="left:236.60000000000002px;top:481px;" width="14" height="14" viewBox="0 0 14 14"><path d="M7.00 1.00 L8.88 5.01 L13.28 5.56 L10.04 8.59 L10.88 12.94 L7.00 10.80 L3.12 12.94 L3.96 8.59 L0.72 5.56 L5.12 5.01 Z" fill="#f6b830" stroke="#f6b830" stroke-width="1" stroke-linejoin="round"/></svg>
<svg class="r" style="left:266.0px;top:481.7px;" width="16" height="15" viewBox="0 0 16 15"><path d="M8.6 1.3 L13.4 1.3 Q14.4 1.3 14.4 2.3 L14.4 7.2 L7.6 14 Q7 14.6 6.4 14 L1.4 9 Q0.8 8.4 1.4 7.8 Z" fill="none" stroke="#62b38a" stroke-width="1.0" stroke-linejoin="round"/><circle cx="11.3" cy="4.6" r="1.05" fill="#62b38a"/></svg>
<svg class="r" style="left:416.80px;top:482.00px" width="4" height="4"><circle cx="2" cy="2" r="1.45" fill="#b0b0b0"/></svg>
<svg class="r" style="left:416.80px;top:486.70px" width="4" height="4"><circle cx="2" cy="2" r="1.45" fill="#b0b0b0"/></svg>
<svg class="r" style="left:416.80px;top:491.40px" width="4" height="4"><circle cx="2" cy="2" r="1.45" fill="#b0b0b0"/></svg>
<div class="r" style="left:459.3px;top:463px;width:225px;height:60px;background:#fff;border-radius:5px;box-shadow:0 1px 1px rgba(0,0,0,0.24);"></div>
<svg class="r" style="left:476.6px;top:481px;" width="14" height="14" viewBox="0 0 14 14"><path d="M7.00 1.00 L8.88 5.01 L13.28 5.56 L10.04 8.59 L10.88 12.94 L7.00 10.80 L3.12 12.94 L3.96 8.59 L0.72 5.56 L5.12 5.01 Z" fill="#f6b830" stroke="#f6b830" stroke-width="1" stroke-linejoin="round"/></svg>
<svg class="r" style="left:503.3px;top:481.7px;" width="16" height="15" viewBox="0 0 16 15"><path d="M8.6 1.3 L13.4 1.3 Q14.4 1.3 14.4 2.3 L14.4 7.2 L7.6 14 Q7 14.6 6.4 14 L1.4 9 Q0.8 8.4 1.4 7.8 Z" fill="none" stroke="#62b38a" stroke-width="1.0" stroke-linejoin="round"/><circle cx="11.3" cy="4.6" r="1.05" fill="#62b38a"/></svg>
<svg class="r" style="left:656.80px;top:482.00px" width="4" height="4"><circle cx="2" cy="2" r="1.45" fill="#b0b0b0"/></svg>
<svg class="r" style="left:656.80px;top:486.70px" width="4" height="4"><circle cx="2" cy="2" r="1.45" fill="#b0b0b0"/></svg>
<svg class="r" style="left:656.80px;top:491.40px" width="4" height="4"><circle cx="2" cy="2" r="1.45" fill="#b0b0b0"/></svg>
<div id="c4n" class="t" style="left:521.70px;top:483.00px;font-size:11px;line-height:11px;color:#5fae86;font-weight:normal;-webkit-text-stroke:0.35px #5fae86;">1</div>
<div class="r" style="left:994px;top:241px;width:223.3px;height:222px;background:#fff;border-radius:5px;box-shadow:0 1px 1px rgba(0,0,0,0.24);"></div>
<svg class="r" style="left:1012px;top:258.6px;" width="14" height="14" viewBox="0 0 14 14"><path d="M7.00 1.20 L8.82 5.09 L13.09 5.62 L9.95 8.56 L10.76 12.78 L7.00 10.70 L3.24 12.78 L4.05 8.56 L0.91 5.62 L5.18 5.09 Z" fill="none" stroke="#bdbdbd" stroke-width="1.05" stroke-linejoin="round"/></svg>
<svg class="r" style="left:1035.6000000000001px;top:259.5px;" width="16" height="15" viewBox="0 0 16 15"><path d="M8.6 1.3 L13.4 1.3 Q14.4 1.3 14.4 2.3 L14.4 7.2 L7.6 14 Q7 14.6 6.4 14 L1.4 9 Q0.8 8.4 1.4 7.8 Z" fill="none" stroke="#62b38a" stroke-width="1.0" stroke-linejoin="round"/><circle cx="11.3" cy="4.6" r="1.05" fill="#62b38a"/></svg>
<div id="r1n" class="t" style="left:1056.30px;top:260.00px;font-size:11px;line-height:11px;color:#5fae86;font-weight:normal;-webkit-text-stroke:0.35px #5fae86;">1</div>
<svg class="r" style="left:1190.20px;top:259.50px" width="4" height="4"><circle cx="2" cy="2" r="1.45" fill="#b0b0b0"/></svg>
<svg class="r" style="left:1190.20px;top:264.20px" width="4" height="4"><circle cx="2" cy="2" r="1.45" fill="#b0b0b0"/></svg>
<svg class="r" style="left:1190.20px;top:268.90px" width="4" height="4"><circle cx="2" cy="2" r="1.45" fill="#b0b0b0"/></svg>
<div id="r1t" class="t" style="left:1009.70px;top:287.00px;font-size:13.2px;line-height:13.2px;color:#1a1a1a;font-weight:normal;transform:scaleX(1.0690);-webkit-text-stroke:0.35px #1a1a1a;">Model</div>
<div id="r1s" class="t" style="left:1009.70px;top:306.00px;font-size:12.3px;line-height:12.3px;color:#333;font-weight:normal;transform:scaleX(0.9487);">Composer Free Form</div>
<div id="r1c" class="t" style="left:1009.70px;top:326.00px;font-size:9px;line-height:9px;color:#808080;font-weight:normal;transform:scaleX(0.9684);"><span class="lb">Created:</span> 9/6/22, 7:45 PM</div>
<div class="r" style="left:994px;top:344.3px;width:223.3px;height:1px;background:#e3e3e3;"></div>
<svg class="r" style="left:1010px;top:368px;" width="45" height="41" viewBox="0 0 45 41"><circle cx="22.2" cy="20.2" r="8" fill="none" stroke="#5db185" stroke-width="1.7"/><path transform="translate(22.2 20.2)" d="M-5.2 6 Q-5.2 3.2 -2.2 2.6 Q-3.6 1.2 -3.6 -1.4 Q-3.6 -5 0 -5 Q3.6 -5 3.6 -1.4 Q3.6 1.2 2.2 2.6 Q5.2 3.2 5.2 6" fill="none" stroke="#5db185" stroke-width="1.5"/><path d="M30.20 20.20 L36.20 20.20" stroke="#5db185" stroke-width="1.6"/><circle cx="39.50" cy="20.20" r="3.3" fill="#fff" stroke="#5db185" stroke-width="1.6"/><path d="M26.20 27.13 L29.20 32.32" stroke="#5db185" stroke-width="1.6"/><circle cx="30.85" cy="35.18" r="3.3" fill="#fff" stroke="#5db185" stroke-width="1.6"/><path d="M18.20 27.13 L15.20 32.32" stroke="#5db185" stroke-width="1.6"/><circle cx="13.55" cy="35.18" r="3.3" fill="#fff" stroke="#5db185" stroke-width="1.6"/><path d="M14.20 20.20 L8.20 20.20" stroke="#5db185" stroke-width="1.6"/><circle cx="4.90" cy="20.20" r="3.3" fill="#fff" stroke="#5db185" stroke-width="1.6"/><path d="M18.20 13.27 L15.20 8.08" stroke="#5db185" stroke-width="1.6"/><circle cx="13.55" cy="5.22" r="3.3" fill="#fff" stroke="#5db185" stroke-width="1.6"/><path d="M26.20 13.27 L29.20 8.08" stroke="#5db185" stroke-width="1.6"/><circle cx="30.85" cy="5.22" r="3.3" fill="#fff" stroke="#5db185" stroke-width="1.6"/></svg>
<div id="dev" class="t" style="left:1073.70px;top:362.00px;font-size:12.3px;line-height:12.3px;color:#333;font-weight:normal;transform:scaleX(0.8611);">Development</div>
<svg class="r" style="left:1141.8px;top:361.8px;" width="13.6" height="13.6" viewBox="0 0 13.6 13.6"><circle cx="6.8" cy="6.8" r="6.8" fill="#5fb287"/><path d="M3.67 7.07 L5.98 9.25 L10.06 4.76" fill="none" stroke="#fff" stroke-width="1.6"/></svg>
<div id="lr1" class="t" style="left:1073.70px;top:380.00px;font-size:9px;line-height:9px;color:#808080;font-weight:normal;transform:scaleX(0.9543);"><span class="lb">Last Run:</span> 9/6/22, 8:35 PM</div>
<svg class="r" style="left:1074px;top:397px;" width="128" height="2" viewBox="0 0 128 2"><line x1="0" y1="1" x2="128" y2="1" stroke="#cdcdcd" stroke-width="1" stroke-dasharray="2.6 1.9"/></svg>
<div id="prod" class="t" style="left:1073.70px;top:407.00px;font-size:12.3px;line-height:12.3px;color:#333;font-weight:normal;transform:scaleX(0.8759);">Production</div>
<svg class="r" style="left:1131px;top:406.5px;" width="13.6" height="13.6" viewBox="0 0 13.6 13.6"><circle cx="6.8" cy="6.8" r="6.8" fill="#5fb287"/><path d="M3.67 7.07 L5.98 9.25 L10.06 4.76" fill="none" stroke="#fff" stroke-width="1.6"/></svg>
<div id="lr2" class="t" style="left:1073.70px;top:426.00px;font-size:9px;line-height:9px;color:#808080;font-weight:normal;transform:scaleX(0.9589);"><span class="lb">Last Run:</span> 9/7/22, 9:14 AM</div>
<div id="nr" class="t" style="left:1073.70px;top:438.00px;font-size:9px;line-height:9px;color:#808080;font-weight:normal;transform:scaleX(0.9143);"><span class="lb">Next Run:</span></div>
<div class="r" style="left:1115.2px;top:437.3px;width:25.2px;height:9.6px;background:#e6e6e6;"></div>
<div id="na" class="t" style="left:1118.70px;top:438.00px;font-size:8.5px;line-height:8.5px;color:#777;font-weight:normal;letter-spacing:1px;">N/A</div>
<div class="r" style="left:1232.5px;top:241px;width:222.7px;height:222.3px;background:#fff;border-radius:5px;box-shadow:0 1px 1px rgba(0,0,0,0.24);overflow:hidden;"></div>
<div class="r" style="left:1232.5px;top:241px;width:222.7px;height:6px;background:#efb872;border-top-left-radius:4px;border-top-right-radius:4px;"></div>
<svg class="r" style="left:1250.2px;top:265.2px;" width="14" height="14" viewBox="0 0 14 14"><path d="M7.00 1.20 L8.82 5.09 L13.09 5.62 L9.95 8.56 L10.76 12.78 L7.00 10.70 L3.24 12.78 L4.05 8.56 L0.91 5.62 L5.18 5.09 Z" fill="none" stroke="#bdbdbd" stroke-width="1.05" stroke-linejoin="round"/></svg>
<svg class="r" style="left:1278.7px;top:266.1px;" width="16" height="15" viewBox="0 0 16 15"><path d="M8.6 1.3 L13.4 1.3 Q14.4 1.3 14.4 2.3 L14.4 7.2 L7.6 14 Q7 14.6 6.4 14 L1.4 9 Q0.8 8.4 1.4 7.8 Z" fill="none" stroke="#62b38a" stroke-width="1.0" stroke-linejoin="round"/><circle cx="11.3" cy="4.6" r="1.05" fill="#62b38a"/></svg>
<svg class="r" style="left:1428.60px;top:265.40px" width="4" height="4"><circle cx="2" cy="2" r="1.45" fill="#b0b0b0"/></svg>
<svg class="r" style="left:1428.60px;top:270.10px" width="4" height="4"><circle cx="2" cy="2" r="1.45" fill="#b0b0b0"/></svg>
<svg class="r" style="left:1428.60px;top:274.80px" width="4" height="4"><circle cx="2" cy="2" r="1.45" fill="#b0b0b0"/></svg>
<div id="r2t" class="t" style="left:1247.90px;top:305.00px;font-size:13.5px;line-height:13.5px;color:#1a1a1a;font-weight:normal;transform:scaleX(1.0342);-webkit-text-stroke:0.35px #1a1a1a;">Sample Notebook</div>
<svg class="r" style="left:1247.6px;top:337.8px;" width="46" height="58" viewBox="0 0 46 58"><path d="M2.5 0.6 L43.6 0.6 Q45.1 0.6 45.1 2 L45.1 52 Q45.1 53.4 43.6 53.4 L2.5 53.4 Z" fill="#ee9c3a"/><path d="M2.5 0.6 L40.3 0.6 L40.3 38.2 Q40.3 50.5 28.7 50.5 L2.5 50.5 Z" fill="#f6c652"/><rect x="2.5" y="50.5" width="3" height="2.9" fill="#f6c652"/><rect x="13.7" y="4.3" width="20.5" height="11.8" fill="#e8e8ea"/><rect x="5.5" y="0.6" width="4.1" height="52.8" fill="#4b4b4b"/><path d="M6.2 53.4 L9 53.4 L9 57.5 L7.6 56.2 L6.2 57.5 Z" fill="#333"/><rect x="0.4" y="3.40" width="5.3" height="1.9" rx="0.95" fill="#333"/><rect x="0.4" y="11.13" width="5.3" height="1.9" rx="0.95" fill="#333"/><rect x="0.4" y="18.86" width="5.3" height="1.9" rx="0.95" fill="#333"/><rect x="0.4" y="26.59" width="5.3" height="1.9" rx="0.95" fill="#333"/><rect x="0.4" y="34.32" width="5.3" height="1.9" rx="0.95" fill="#333"/><rect x="0.4" y="42.05" width="5.3" height="1.9" rx="0.95" fill="#333"/><rect x="0.4" y="49.78" width="5.3" height="1.9" rx="0.95" fill="#333"/></svg>
<div id="r2m0" class="t" style="left:1324.40px;top:339.00px;font-size:9px;line-height:9px;color:#808080;font-weight:normal;transform:scaleX(0.955);"><span class="lb">Owner:</span> Sample User</div>
<div id="r2m1" class="t" style="left:1324.40px;top:353.00px;font-size:9px;line-height:9px;color:#808080;font-weight:normal;transform:scaleX(0.955);"><span class="lb">Language:</span> PYTHON</div>
<div id="r2m2" class="t" style="left:1324.40px;top:366.00px;font-size:9px;line-height:9px;color:#808080;font-weight:normal;transform:scaleX(0.9623);"><span class="lb">Created:</span> 9/12/22, 2:32 PM</div>
<div id="r2m3" class="t" style="left:1324.40px;top:380.00px;font-size:9px;line-height:9px;color:#808080;font-weight:normal;transform:scaleX(0.955);"><span class="lb">Sharing:</span> Private</div>
<div class="r" style="left:1232.5px;top:418.3px;width:222.7px;height:1px;background:#e6e6e6;"></div>
<svg class="r" style="left:1249.5px;top:430.5px;" width="11" height="15" viewBox="0 0 11 15"><path d="M1.4 1 L9.4 1 L9.4 11.4 L2.4 11.4 Q1.4 11.4 1.4 12.4 Q1.4 13.4 2.4 13.4 L9.4 13.4 M1.4 1 L1.4 12.4 M3.8 1 L3.8 5 L4.8 4.2 L5.8 5 L5.8 1" fill="none" stroke="#b0b8c0" stroke-width="0.9"/></svg>
<div id="r2ft" class="t" style="left:1265.30px;top:432.00px;font-size:11.5px;line-height:11.5px;color:#222;font-weight:normal;transform:scaleX(0.9465);">Notebook</div>
<div class="r" style="left:1px;top:496px;width:757px;height:2px;background:#ffffff;"></div>
<div class="r" style="left:0px;top:496.3px;width:758px;height:1.7px;background:#b9b9b9;"></div>
<div class="r" style="left:0px;top:490px;width:6px;height:8px;background:#ffffff;"></div>
<svg class="r" style="left:0px;top:490px;" width="6" height="8" viewBox="0 0 6 8"><path d="M0.5 0 L0.5 3 Q0.5 6.6 4 6.6 L6 6.6" fill="none" stroke="#b9b9b9" stroke-width="1.2"/></svg>
<div class="r" style="left:752px;top:490px;width:6px;height:8px;background:#ffffff;"></div>
<svg class="r" style="left:752px;top:490px;" width="6" height="8" viewBox="0 0 6 8"><path d="M0 0 L5.5 0 L5.5 4.5 Q5.5 6.6 3.4 6.6 L0 6.6 Z" fill="#eff3f7"/><path d="M5.5 0 L5.5 4.5 Q5.5 6.6 3.4 6.6 L0 6.6" fill="none" stroke="#b9b9b9" stroke-width="1.2"/></svg>
</body></html>
